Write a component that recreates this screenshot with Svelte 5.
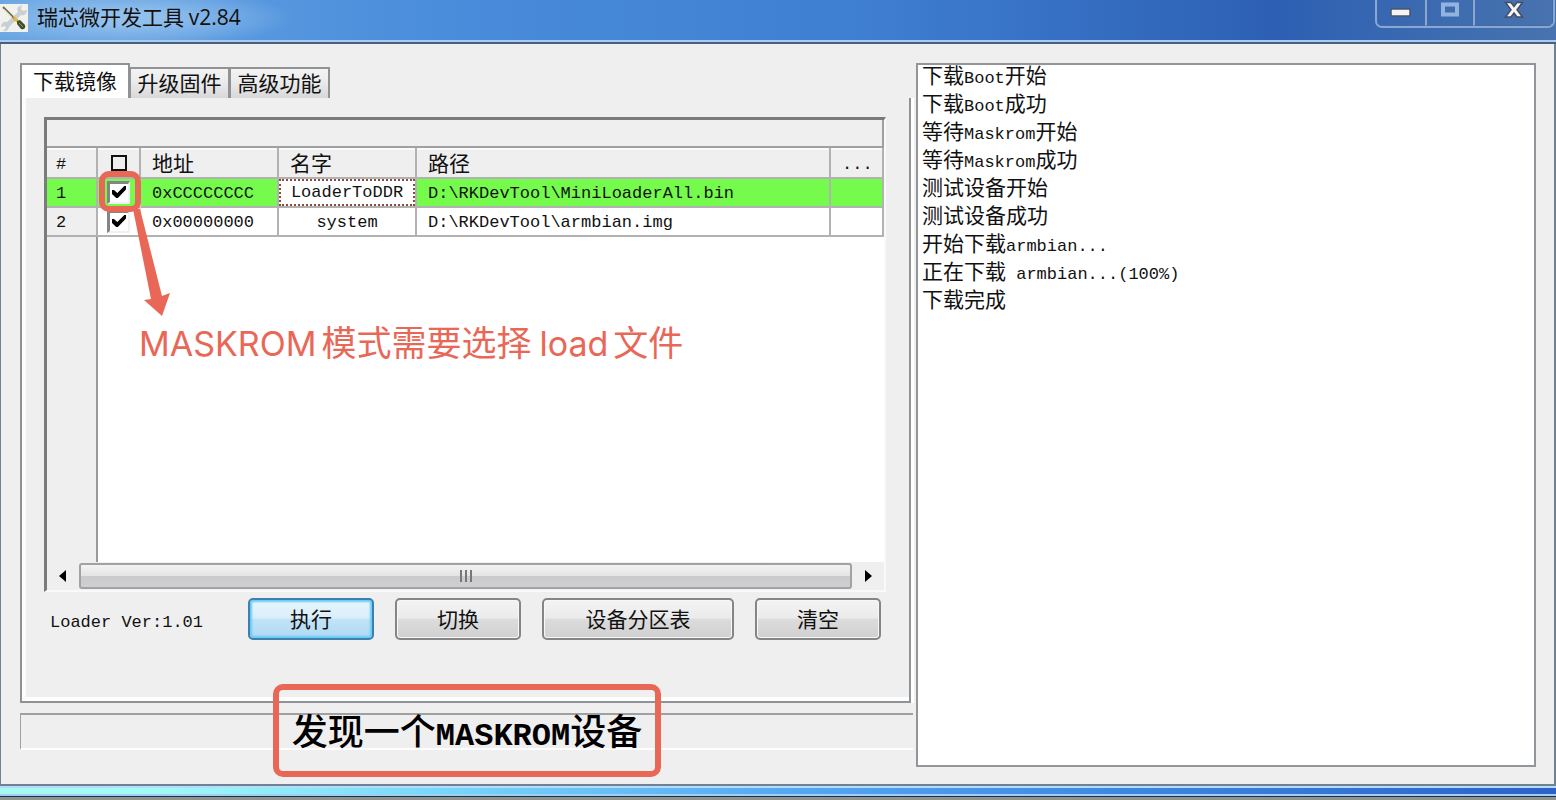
<script>
  let tabs = ["下载镜像", "升级固件", "高级功能"];
  let activeTab = 0;
  let allChecked = false;

  let rows = [
    {
      checked: true,
      address: "0xCCCCCCCC",
      name: "LoaderToDDR",
      path: "D:\\RKDevTool\\MiniLoaderAll.bin",
      selected: true,
    },
    {
      checked: true,
      address: "0x00000000",
      name: "system",
      path: "D:\\RKDevTool\\armbian.img",
      selected: false,
    },
  ];

  let log = [
    "下载Boot开始",
    "下载Boot成功",
    "等待Maskrom开始",
    "等待Maskrom成功",
    "测试设备开始",
    "测试设备成功",
    "开始下载armbian...",
    "正在下载 armbian...(100%)",
    "下载完成",
  ];

  // latin runs get their own size so two letters are as wide as one hanzi
  let runs = (text) => text.match(/[\x20-\x7e]+|[^\x20-\x7e]+/g);
  let isLatin = (run) => run.charCodeAt(0) < 128;
</script>

<div class="window">
  <header class="titlebar">
    <svg class="app-icon" viewBox="0 0 28 28" aria-hidden="true">
      <rect width="28" height="28" fill="#f1f2ee" />
      <path
        d="M18 3l4-2-1 4 2 2 4-1c0 4-3 6-6 5L9 23c0 3-3 5-6 4l3-3-1-2-4 1c0-4 3-6 6-5L18 8c-1-2-1-4 0-5z"
        fill="#c9d0d3"
      />
      <path d="M3 3l12 12" stroke="#6f6a50" stroke-width="2" />
      <path d="M4 5l8 8" stroke="#d7c77a" stroke-width="1" />
      <path d="M13 12l5 3 1 4-5-2z" fill="#e6b93c" />
      <path d="M17 17l3-1 5 5c1 3-1 5-4 4l-4-5z" fill="#40502b" />
      <path d="M19 19l4 4" stroke="#8aa05c" stroke-width="1" />
    </svg>
    <h1>瑞芯微开发工具 <span>v2.84</span></h1>
    <div class="controls">
      <button class="min" aria-label="最小化">
        <svg width="22" height="10" viewBox="0 0 22 10">
          <rect x="1" y="1" width="19" height="7" rx="1" fill="#f4f4f4" stroke="#4b5468" stroke-width="1.5" />
        </svg>
      </button>
      <button class="max" aria-label="最大化" disabled>
        <svg width="20" height="16" viewBox="0 0 20 16">
          <rect x="3" y="2.500" width="14" height="10" fill="none" stroke="#93b3df" stroke-width="4" />
        </svg>
      </button>
      <button class="close" aria-label="关闭">
        <svg width="20" height="18" viewBox="0 0 20 18">
          <path
            d="M1.500 1.500h5.500l3 4 3-4h5.500l-5.500 7.200 5.500 7.300h-5.500l-3-4-3 4H1.500l5.500-7.300z"
            fill="#f6f6f6"
            stroke="#454d61"
            stroke-width="1.500"
          />
        </svg>
      </button>
    </div>
  </header>

  <main>
    <section class="left">
      <div class="tabs" role="tablist">
        {#each tabs as tab, i}
          <button
            role="tab"
            class:active={i === activeTab}
            aria-selected={i === activeTab}
            on:click={() => (activeTab = i)}>{tab}</button
          >
        {/each}
      </div>

      <div class="panel">
        <div class="list">
          <div class="band"></div>
          <div class="rows">
            <table>
              <colgroup>
                <col class="c-num" />
                <col class="c-check" />
                <col class="c-address" />
                <col class="c-name" />
                <col />
                <col class="c-more" />
              </colgroup>
              <thead>
                <tr>
                  <th class="num">#</th>
                  <th class="check">
                    <input type="checkbox" class="all" aria-label="全选" bind:checked={allChecked} />
                  </th>
                  <th>地址</th>
                  <th>名字</th>
                  <th>路径</th>
                  <th class="more">...</th>
                </tr>
              </thead>
              <tbody>
                {#each rows as row, i}
                  <tr class:selected={row.selected}>
                    <td class="num">{i + 1}</td>
                    <td class="check">
                      <input type="checkbox" aria-label={row.name} bind:checked={row.checked} />
                      {#if row.selected}
                        <span class="mark"></span>
                        <svg class="arrow" width="44" height="112" viewBox="0 0 44 112" aria-hidden="true">
                          <path d="M7 4h7l22 87 8-3-8 23-18-16 7-1z" />
                        </svg>
                      {/if}
                    </td>
                    <td>{row.address}</td>
                    <td class="name">
                      {#if row.selected}
                        <input type="text" aria-label="名字" bind:value={row.name} />
                      {:else}
                        {row.name}
                      {/if}
                    </td>
                    <td>{row.path}</td>
                    <td></td>
                  </tr>
                {/each}
              </tbody>
            </table>
            <p class="note"><span>MASKROM</span>模式需要选择<span class="inner">load</span>文件</p>
          </div>
          <div class="scrollbar">
            <button aria-label="向左滚动">
              <svg width="8" height="12" viewBox="0 0 8 12"><path d="M7 0v12L0 6z" /></svg>
            </button>
            <div class="thumb"><i></i><i></i><i></i></div>
            <button aria-label="向右滚动">
              <svg width="8" height="12" viewBox="0 0 8 12"><path d="M1 0v12l7-6z" /></svg>
            </button>
          </div>
        </div>

        <div class="actions">
          <span class="version">Loader Ver:1.01</span>
          <button class="primary">执行</button>
          <button>切换</button>
          <button class="wide">设备分区表</button>
          <button>清空</button>
        </div>
      </div>

      <div class="status">
        <strong>发现一个<b>MASKROM</b>设备</strong>
        <span class="frame"></span>
      </div>
    </section>

    <section class="log">
      {#each log as line}
        <p>
          {#each runs(line) as run}<span class:latin={isLatin(run)}>{run}</span>{/each}
        </p>
      {/each}
    </section>
  </main>

  <footer></footer>
</div>

<style>
  :global(body) {
    margin: 0;
  }

  .window {
    --line: #909396;
    --face: #efefef;
    --red: #e96757;
    --mono: "Liberation Mono", "Noto Sans CJK SC", monospace;
    --hanzi: "Noto Sans CJK SC", sans-serif;
    display: flex;
    flex-direction: column;
    height: 100vh;
    overflow: hidden;
    background: var(--face);
    color: #111;
    font-family: var(--hanzi);
    font-size: 21px;
    font-weight: 400;
  }

  .window *,
  .window {
    box-sizing: border-box;
  }

  button,
  input {
    margin: 0;
    padding: 0;
    border: 0;
    border-radius: 0;
    background: none;
    color: inherit;
    font: inherit;
  }

  p,
  h1 {
    margin: 0;
  }

  .titlebar {
    display: flex;
    flex: none;
    height: 44px;
    border-bottom: 2px solid #49617f;
    box-shadow: inset 0 -2px #a9cdf2;
    background:
      radial-gradient(ellipse 170px 30px at 125px 18px, #92c0ec 0 20%, transparent),
      linear-gradient(90deg, #68a5e3, #4a8ddb 28%, #3f7fd2 55%, #2d60b4 82%, #4873ae);
  }

  .app-icon {
    flex: none;
    width: 28px;
    height: 28px;
    margin-top: 4px;
  }

  h1 {
    padding-left: 9px;
    font-size: 21px;
    font-weight: 400;
    line-height: 32px;
    white-space: nowrap;
  }

  h1 span {
    font-family: "Open Sans", sans-serif;
    font-size: 21px;
  }

  .controls {
    display: flex;
    height: 28px;
    margin-left: auto;
    margin-right: 1px;
    border: 2px solid #86a8d8;
    border-top: 0;
    border-radius: 0 0 7px 7px;
    overflow: hidden;
  }

  .controls button {
    display: flex;
    align-items: center;
    justify-content: center;
    width: 48px;
    padding-bottom: 6px;
    border: 1px solid #48699c;
    border-top: 0;
  }

  .controls .min {
    padding-bottom: 0;
  }

  .controls button + button {
    border-left: 2px solid #86a8d8;
  }

  .controls .close {
    width: 80px;
  }

  main {
    display: grid;
    flex: 1;
    grid-template-columns: 893fr 620fr;
    gap: 3px;
    min-height: 0;
    padding: 19px 18px 17px 19px;
    border: solid #6d8199;
    border-width: 0 2px 2px 1px;
  }

  .left {
    display: flex;
    flex-direction: column;
    min-width: 0;
  }

  .tabs {
    display: flex;
    align-items: flex-end;
    height: 35px;
  }

  .tabs button {
    width: 100px;
    height: 31px;
    border: 1px solid var(--line);
    border-width: 2px 2px 0 1px;
    background: linear-gradient(#f3f3f3, #ebebeb 45%, #d8d8d8);
    line-height: 24px;
    padding-bottom: 3px;
  }

  .tabs .active {
    width: 110px;
    height: 35px;
    border-left-width: 2px;
    background: #fff;
  }

  .panel {
    display: flex;
    flex: 1;
    flex-direction: column;
    min-height: 0;
    margin-right: 2px;
    padding: 19px 19px 0 18px;
    border: solid var(--line);
    border-width: 0 2px 2px;
    box-shadow:
      inset 4px 0 #fcfcfc,
      inset 0 -4px #fff,
      3px 0 #fff;
  }

  .list {
    display: flex;
    flex: 1;
    flex-direction: column;
    min-height: 0;
    margin: 0 4px;
    border: 3px solid;
    border-color: #7b7b7b #f9f9f9 #f9f9f9 #7b7b7b;
    border-width: 3px 2px 2px 3px;
  }

  .band {
    height: 28px;
    flex: none;
    border-right: 2px solid #a0a0a0;
    border-bottom: 2px solid #a0a0a0;
  }

  .rows {
    position: relative;
    flex: 1;
    min-height: 0;
    background: linear-gradient(90deg, var(--face) 49px, #999 49px, #999 51px, #fff 51px);
  }

  table {
    width: 100%;
    table-layout: fixed;
    border-spacing: 0;
    font-family: var(--mono);
    font-size: 17px;
  }

  .c-num {
    width: 51px;
  }

  .c-check {
    width: 43px;
  }

  .c-address,
  .c-name {
    width: 138px;
  }

  .c-more {
    width: 53px;
  }

  th,
  td {
    height: 29px;
    padding: 2px 0 0 11px;
    border-right: 2px solid #b2b2b2;
    border-bottom: 2px solid #b2b2b2;
    line-height: 24px;
    text-align: left;
    white-space: nowrap;
  }

  th {
    height: 31px;
    padding-top: 0;
    padding-bottom: 2px;
    background: var(--face);
    box-shadow: inset 0 2px #fafafa;
    font-family: var(--hanzi);
    font-size: 21px;
    font-weight: 400;
  }

  .num {
    padding-left: 9px;
    background: var(--face);
  }

  th.num,
  th.more {
    padding-top: 4px;
    padding-bottom: 0;
    font-family: var(--mono);
    font-size: 17px;
  }

  .check {
    position: relative;
    padding: 0;
    text-align: center;
  }

  td.check {
    border-right-color: #ddd;
  }

  .name {
    padding-left: 0;
    text-align: center;
  }

  .selected td {
    background: #75fb4c;
  }

  .selected .name {
    padding: 0;
  }

  input[type="checkbox"] {
    display: block;
    width: 23px;
    height: 23px;
    margin: 0 auto;
    appearance: none;
    border: 3px solid;
    border-color: #858585 #f1f1f1 #f1f1f1 #858585;
    border-width: 3px 2px 2px 3px;
    background: #fff;
  }

  input[type="checkbox"]:checked::before {
    content: "";
    display: block;
    width: 14px;
    height: 12px;
    margin: 2px;
    background: #000;
    clip-path: polygon(0 34%, 14% 34%, 38% 58%, 88% 0, 100% 0, 100% 30%, 42% 100%, 30% 100%, 0 66%);
  }

  input.all {
    width: 16px;
    height: 16px;
    border: 2px solid #111;
    background: none;
  }

  .name input {
    display: block;
    width: 100%;
    height: 27px;
    border: 2px dotted #8b4a3a;
    background: #fff;
    text-align: center;
  }

  .mark {
    position: absolute;
    z-index: 2;
    top: -8px;
    left: 1px;
    width: 42px;
    height: 41px;
    border: 6px solid var(--red);
    border-radius: 10px;
  }

  .arrow {
    position: absolute;
    z-index: 1;
    top: 26px;
    left: 28px;
    fill: var(--red);
  }

  .note {
    position: absolute;
    top: 168px;
    left: 92px;
    color: var(--red);
    font-size: 35px;
    line-height: 50px;
    white-space: nowrap;
  }

  .note span {
    padding-right: 5px;
    font-family: Inter, sans-serif;
    font-size: 34px;
  }

  .note .inner {
    padding-left: 8px;
  }

  .scrollbar {
    display: flex;
    flex: none;
    height: 28px;
    padding: 1px 0;
  }

  .scrollbar button {
    display: flex;
    align-items: center;
    justify-content: center;
    width: 32px;
  }

  .thumb {
    display: flex;
    flex: 1;
    align-items: center;
    justify-content: center;
    gap: 3px;
    border: 2px solid #a2a2a2;
    border-radius: 3px;
    background: linear-gradient(#f3f3f3, #e4e4e4 50%, #cbcbcd 52%, #cfcfd1);
  }

  .thumb i {
    width: 2px;
    height: 12px;
    background: #777;
  }

  .actions {
    display: flex;
    align-items: center;
    flex: none;
    gap: 21px;
    height: 109px;
    padding: 6px 9px 62px 10px;
  }

  .version {
    margin-right: auto;
    padding-top: 7px;
    font-family: var(--mono);
    font-size: 17px;
    white-space: nowrap;
  }

  .actions button {
    width: 126px;
    height: 42px;
    padding-bottom: 2px;
    border: 2px solid #858585;
    border-radius: 5px;
    background: linear-gradient(#f3f3f3, #ebebeb 48%, #dcdcdc 50%, #d0d0d0);
    box-shadow: inset 0 0 0 1px #f8f8f8;
  }

  .actions .wide {
    width: 192px;
  }

  .actions .primary {
    border-color: #3f7fae;
    background: linear-gradient(#e9f5fc, #d9eefb 48%, #c2e3f7 50%, #b0d9f3);
    box-shadow: inset 0 0 2px 2px #62cdf8;
  }

  .status {
    position: relative;
    display: flex;
    align-items: center;
    justify-content: center;
    flex: none;
    height: 37px;
    margin: 10px 0 17px;
    border: solid #a0a0a0;
    border-width: 2px 0 2px 1px;
    border-bottom-color: #fff;
  }

  .status strong {
    padding-top: 2px;
    color: #000;
    font-size: 36px;
    font-weight: 500;
    line-height: 36px;
    white-space: nowrap;
  }

  .status b {
    font-family: var(--mono);
    font-size: 32px;
  }

  .frame {
    position: absolute;
    top: -31px;
    left: 50%;
    width: 388px;
    height: 93px;
    border: 6px solid var(--red);
    border-radius: 10px;
    transform: translateX(-50%);
  }

  .log {
    display: flex;
    flex-direction: column;
    gap: 10px;
    min-width: 0;
    padding: 0 4px;
    border: 2px solid #92959a;
    background: #fff;
  }

  .log p {
    height: 18px;
    line-height: 18px;
    white-space: pre;
  }

  .latin {
    font-family: var(--mono);
    font-size: 17px;
  }

  footer {
    flex: none;
    height: 14px;
    border-top: 2px solid #b8dcf8;
    border-bottom: 3px solid #8e9590;
    box-shadow: inset 0 -1px #1e3046, inset 0 -3px #a4cdf3;
    background: linear-gradient(90deg, #a5fbf2, #a0fbf6 10%, #76d8fa 28%, #56a8f3 50%, #3c87e4 72%, #2c62c8);
  }
</style>
